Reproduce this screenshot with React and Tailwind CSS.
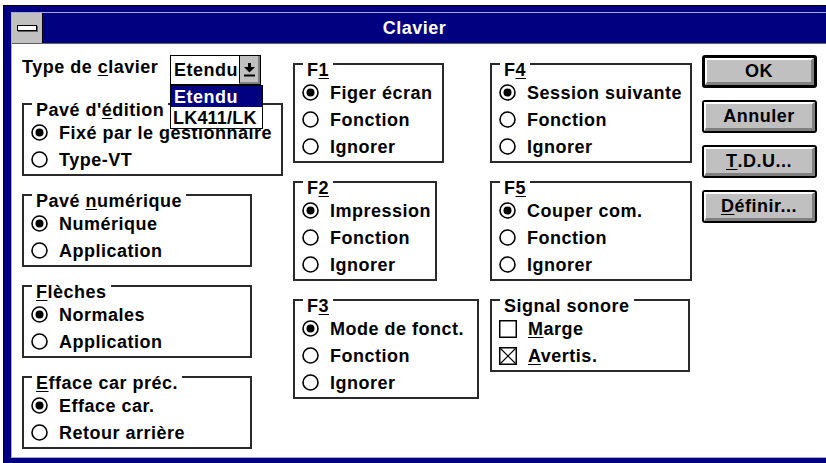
import React from 'react';

function Radio({ checked }) {
  return (
    <svg width="17" height="17" viewBox="0 0 17 17" className="shrink-0">
      <circle cx="8.5" cy="8.5" r="7.5" fill="white" stroke="black" strokeWidth="1.6" />
      {checked && <circle cx="8.5" cy="8.5" r="4" fill="black" />}
    </svg>
  );
}

function Check({ checked }) {
  return (
    <svg width="18" height="18" viewBox="0 0 18 18" className="shrink-0">
      <rect x="0.75" y="0.75" width="16.5" height="16.5" fill="white" stroke="black" strokeWidth="1.5" />
      {checked && (
        <>
          <line x1="1.5" y1="1.5" x2="16.5" y2="16.5" stroke="black" strokeWidth="1.2" />
          <line x1="16.5" y1="1.5" x2="1.5" y2="16.5" stroke="black" strokeWidth="1.2" />
        </>
      )}
    </svg>
  );
}

function Group({ label, className, children }) {
  return (
    <div className={`relative border-2 border-[#2a2a2a] pt-[14px] pb-[1px] ${className}`}>
      <span className="absolute left-[8px] -top-[5px] bg-white px-[4px] whitespace-nowrap">{label}</span>
      {children}
    </div>
  );
}

function Option({ checked, children }) {
  return (
    <div className="flex items-center h-[27px] pl-[7px] whitespace-nowrap">
      <Radio checked={checked} />
      <span className="ml-[11px]">{children}</span>
    </div>
  );
}

function Box({ checked, children }) {
  return (
    <div className="flex items-center h-[27px] pl-[7px] whitespace-nowrap">
      <Check checked={checked} />
      <span className="ml-[11px]">{children}</span>
    </div>
  );
}

function Button({ isDefault, children }) {
  return (
    <div
      className={`h-[33px] w-[115px] rounded-[3px] border-black ${isDefault ? 'border-[3px]' : 'border-2'}`}
    >
      <div className="h-full w-full flex items-center justify-center bg-[#c0c0c0] border-t-2 border-l-2 border-b-[3px] border-r-[3px] border-t-white border-l-white border-b-[#808080] border-r-[#808080]">
        {children}
      </div>
    </div>
  );
}

export default function App() {
  return (
    <div className="w-[826px] h-[463px] bg-white overflow-hidden font-['Liberation_Sans',Arial,sans-serif] font-bold text-[18px] tracking-[0.5px] leading-[20px] text-black">
      <div className="ml-[3px] mt-[5px] h-[458px] bg-[#000080] border-t border-l border-black pt-[6px] pl-[7px] flex flex-col">
        <div className="flex-1 flex flex-col border-t border-l border-b border-[#a8a8d8] mb-[5px]">
          {/* title bar */}
          <div className="flex h-[31px] border-b border-[#606060]">
            <div className="w-[31px] bg-[#c0c0c0] border-r border-black flex items-center justify-center">
              <div className="w-[20px] h-[6px] bg-white border border-black shadow-[1px_1px_0_#606060]" />
            </div>
            <div className="flex-1 bg-[#000080] flex items-center justify-center pr-[40px] text-white">
              Clavier
            </div>
          </div>

          {/* client */}
          <div className="flex-1 bg-white flex items-start pt-[11px]">
            {/* left column */}
            <div className="relative w-[261px] ml-[10px] flex flex-col">
              <div className="flex items-start h-[30px]">
                <span className="w-[148px] mt-[2px] whitespace-nowrap">
                  Type de <u className="underline-offset-2">c</u>lavier
                </span>
                <div className="flex h-[30px] w-[91px] border border-black">
                  <div className="flex-1 bg-white flex items-center pl-[3px]">Etendu</div>
                  <div className="w-[21px] bg-[#c0c0c0] border-l border-black flex items-center justify-center border-r-2 border-b-2 border-r-[#808080] border-b-[#808080]">
                    <svg width="11" height="15" viewBox="0 0 11 15">
                      <rect x="4" y="1" width="3" height="4" fill="black" />
                      <polygon points="0,5 11,5 5.5,10.5" fill="black" />
                      <rect x="0" y="12.5" width="11" height="2" fill="black" />
                    </svg>
                  </div>
                </div>
              </div>
              <div className="absolute left-[148px] top-[30px] z-10 w-[93px] h-[44px] border border-black bg-white overflow-hidden">
                <div className="h-[21px] bg-[#000080] text-white flex items-center pl-[3px]">Etendu</div>
                <div className="h-[21px] flex items-center pl-[2px] whitespace-nowrap tracking-[0.2px]">LK411/LK</div>
              </div>

              <Group className="mt-[18px] w-[261px]" label={<>Pavé d'<u className="underline-offset-2">é</u>dition</>}>
                <Option checked>Fixé par le gestionnaire</Option>
                <Option>Type-VT</Option>
              </Group>
              <Group className="mt-[18px] w-[230px]" label={<>Pavé <u className="underline-offset-2">n</u>umérique</>}>
                <Option checked>Numérique</Option>
                <Option>Application</Option>
              </Group>
              <Group className="mt-[18px] w-[230px]" label={<><u className="underline-offset-2">F</u>lèches</>}>
                <Option checked>Normales</Option>
                <Option>Application</Option>
              </Group>
              <Group className="mt-[18px] w-[230px]" label={<><u className="underline-offset-2">E</u>fface car préc.</>}>
                <Option checked>Efface car.</Option>
                <Option>Retour arrière</Option>
              </Group>
            </div>

            {/* middle column */}
            <div className="w-[186px] ml-[10px] pt-[8px] flex flex-col gap-[18px]">
              <Group className="w-[151px]" label={<>F<u className="underline-offset-2">1</u></>}>
                <Option checked>Figer écran</Option>
                <Option>Fonction</Option>
                <Option>Ignorer</Option>
              </Group>
              <Group className="w-[144px]" label={<>F<u className="underline-offset-2">2</u></>}>
                <Option checked>Impression</Option>
                <Option>Fonction</Option>
                <Option>Ignorer</Option>
              </Group>
              <Group className="w-[186px]" label={<>F<u className="underline-offset-2">3</u></>}>
                <Option checked>Mode de fonct.</Option>
                <Option>Fonction</Option>
                <Option>Ignorer</Option>
              </Group>
            </div>

            {/* right column */}
            <div className="w-[202px] ml-[11px] pt-[8px] flex flex-col gap-[18px]">
              <Group className="w-[202px]" label={<>F<u className="underline-offset-2">4</u></>}>
                <Option checked>Session suivante</Option>
                <Option>Fonction</Option>
                <Option>Ignorer</Option>
              </Group>
              <Group className="w-[202px]" label={<>F<u className="underline-offset-2">5</u></>}>
                <Option checked>Couper com.</Option>
                <Option>Fonction</Option>
                <Option>Ignorer</Option>
              </Group>
              <Group className="w-[200px]" label="Signal sonore">
                <Box><u className="underline-offset-2">M</u>arge</Box>
                <Box checked><u className="underline-offset-2">A</u>vertis.</Box>
              </Group>
            </div>

            {/* buttons */}
            <div className="ml-[10px] flex flex-col gap-[12px]">
              <Button isDefault>OK</Button>
              <Button>Annuler</Button>
              <Button><u className="underline-offset-2">T</u>.D.U...</Button>
              <Button><u className="underline-offset-2">D</u>éfinir...</Button>
            </div>
          </div>
        </div>
      </div>
    </div>
  );
}
